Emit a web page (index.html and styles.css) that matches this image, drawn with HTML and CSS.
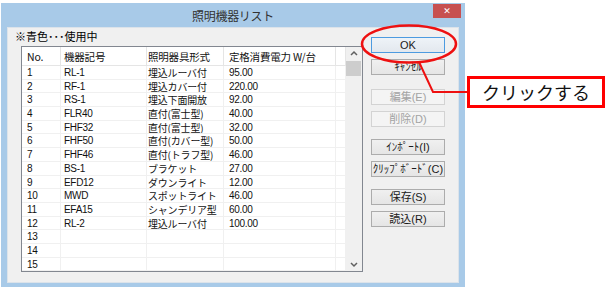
FILE: index.html
```html
<!DOCTYPE html>
<html lang="ja">
<head>
    <meta charset="UTF-8">
    <title>照明機器リスト</title>
    <link rel="stylesheet" href="styles.css">
</head>
<body>

<div class="window">
    <div class="title-bar">
        <span class="title">照明機器リスト</span>
        <span class="close-btn">&#x2715;</span>
    </div>

    <div class="window-body">
        <div class="list-side">
            <div class="note">※青色･･･使用中</div>

            <div class="list-box">
                <div class="grid">
                    <div class="row head">
                        <div class="c1">No.</div>
                        <div class="c2">機器記号</div>
                        <div class="c3">照明器具形式</div>
                        <div class="c4">定格消費電力 W/台</div>
                        <div class="c5"></div>
                    </div>
                    <div class="row"><div class="c1">1</div><div class="c2">RL-1</div><div class="c3">埋込ルーバ付</div><div class="c4">95.00</div><div class="c5"></div></div>
                    <div class="row"><div class="c1">2</div><div class="c2">RF-1</div><div class="c3">埋込カバー付</div><div class="c4">220.00</div><div class="c5"></div></div>
                    <div class="row"><div class="c1">3</div><div class="c2">RS-1</div><div class="c3">埋込下面開放</div><div class="c4">92.00</div><div class="c5"></div></div>
                    <div class="row"><div class="c1">4</div><div class="c2">FLR40</div><div class="c3">直付(富士型)</div><div class="c4">40.00</div><div class="c5"></div></div>
                    <div class="row"><div class="c1">5</div><div class="c2">FHF32</div><div class="c3">直付(富士型)</div><div class="c4">32.00</div><div class="c5"></div></div>
                    <div class="row"><div class="c1">6</div><div class="c2">FHF50</div><div class="c3">直付(カバー型)</div><div class="c4">50.00</div><div class="c5"></div></div>
                    <div class="row"><div class="c1">7</div><div class="c2">FHF46</div><div class="c3">直付(トラフ型)</div><div class="c4">46.00</div><div class="c5"></div></div>
                    <div class="row"><div class="c1">8</div><div class="c2">BS-1</div><div class="c3">ブラケット</div><div class="c4">27.00</div><div class="c5"></div></div>
                    <div class="row"><div class="c1">9</div><div class="c2">EFD12</div><div class="c3">ダウンライト</div><div class="c4">12.00</div><div class="c5"></div></div>
                    <div class="row"><div class="c1">10</div><div class="c2">MWD</div><div class="c3">スポットライト</div><div class="c4">46.00</div><div class="c5"></div></div>
                    <div class="row"><div class="c1">11</div><div class="c2">EFA15</div><div class="c3">シャンデリア型</div><div class="c4">60.00</div><div class="c5"></div></div>
                    <div class="row"><div class="c1">12</div><div class="c2">RL-2</div><div class="c3">埋込ルーバ付</div><div class="c4">100.00</div><div class="c5"></div></div>
                    <div class="row"><div class="c1">13</div><div class="c2"></div><div class="c3"></div><div class="c4"></div><div class="c5"></div></div>
                    <div class="row"><div class="c1">14</div><div class="c2"></div><div class="c3"></div><div class="c4"></div><div class="c5"></div></div>
                    <div class="row"><div class="c1">15</div><div class="c2"></div><div class="c3"></div><div class="c4"></div><div class="c5"></div></div>
                </div>

                <div class="scrollbar">
                    <svg class="arrow" width="16" height="13" viewBox="0 0 16 13">
                        <path d="M5 8 L8 5 L11 8" fill="none" stroke="#606060" stroke-width="1.5"/>
                    </svg>
                    <div class="thumb"></div>
                    <div class="track"></div>
                    <svg class="arrow" width="16" height="13" viewBox="0 0 16 13">
                        <path d="M5 5 L8 8 L11 5" fill="none" stroke="#606060" stroke-width="1.5"/>
                    </svg>
                </div>
            </div>
        </div>

        <div class="buttons">
            <div class="btn-group">
                <button class="btn default">OK</button>
                <button class="btn">ｷｬﾝｾﾙ</button>
            </div>
            <div class="btn-group">
                <button class="btn" disabled>編集(E)</button>
                <button class="btn" disabled>削除(D)</button>
            </div>
            <div class="btn-group tight">
                <button class="btn">ｲﾝﾎﾟｰﾄ(I)</button>
                <button class="btn">ｸﾘｯﾌﾟﾎﾞｰﾄﾞ(C)</button>
            </div>
            <div class="btn-group tight">
                <button class="btn">保存(S)</button>
                <button class="btn">読込(R)</button>
            </div>
        </div>
    </div>
</div>

<!-- annotation drawn over the screenshot -->
<svg class="marks" width="608" height="290" viewBox="0 0 608 290">
    <ellipse cx="409" cy="44" rx="47" ry="18.5" fill="none" stroke="#ee1010" stroke-width="2.5"/>
    <polyline points="419,62 433,92 467,92" fill="none" stroke="#ee1010" stroke-width="2"/>
</svg>
<div class="callout">クリックする</div>

</body>
</html>
```

FILE: styles.css
```css
/* Page */
body {
    margin: 0;
    width: 608px;
    height: 290px;
    background: #ffffff;
    font-family: "Noto Sans CJK JP", sans-serif;
    position: relative;
    overflow: hidden;
}

/* Dialog window frame */
.window {
    margin: 3px 0 0 1px;
    width: 464px;
    height: 284px;
    box-sizing: border-box;
    background: #a8cae8;
    padding: 0 6px 4px 6px;
    display: flex;
    flex-direction: column;
}

.title-bar {
    height: 24px;
    display: flex;
    align-items: center;
    justify-content: center;
    position: relative;
}

.title {
    font-size: 12px;
    color: #333333;
    letter-spacing: -0.3px;
}

.close-btn {
    position: absolute;
    right: -2px;
    top: 1px;
    width: 28px;
    height: 14px;
    background: #c75050;
    color: #ffffff;
    font-size: 9px;
    font-weight: bold;
    display: flex;
    align-items: center;
    justify-content: center;
    font-family: "DejaVu Sans", sans-serif;
}

.window-body {
    flex: 1;
    background: #f0f0f0;
    display: flex;
    border: 1px solid #dce3ea;
}

/* Left side: note and list */
.list-side {
    display: flex;
    flex-direction: column;
    padding-left: 7px;
}

.note {
    font-size: 11px;
    line-height: 17px;
    color: #000000;
    white-space: nowrap;
}

.list-box {
    margin: 1px 0 0 6px;
    width: 342px;
    height: 226px;
    box-sizing: border-box;
    border: 1px solid #828790;
    background: #ffffff;
    display: flex;
}

.grid {
    width: 324px;
    height: 224px;
    overflow: hidden;
}

.row {
    display: grid;
    grid-template-columns: 39px 86px 77px 112px 10px;
    height: 13.7px;
    line-height: 13px;
    font-family: "Liberation Sans", "Noto Sans CJK JP", sans-serif;
    font-size: 10px;
    letter-spacing: -0.3px;
    color: #111111;
    box-sizing: border-box;
    border-bottom: 1px solid #f0f0f0;
}

.row > div {
    border-right: 1px solid #f0f0f0;
    white-space: nowrap;
    overflow: hidden;
}

.row .c3 {
    font-family: "Noto Sans CJK JP", sans-serif;
    font-size: 10px;
    letter-spacing: -0.2px;
}

.row.head {
    height: 19px;
    line-height: 19px;
    font-size: 10.5px;
    border-bottom: 1px solid #e5e5e5;
}

.row.head > div {
    border-right: 1px solid #e5e5e5;
    font-family: "Noto Sans CJK JP", sans-serif;
    font-size: 10.5px;
    letter-spacing: -0.2px;
}

.c1 { padding-left: 5px; }
.c2 { padding-left: 3px; }
.c3 { padding-left: 1px; }
.c4 { padding-left: 5px; }

/* Vertical scrollbar */
.scrollbar {
    width: 16px;
    background: #f0f0f0;
    display: flex;
    flex-direction: column;
}

.arrow {
    display: block;
    flex: none;
}

.thumb {
    height: 15px;
    margin: 1px 1px 0 0;
    background: #cdcdcd;
}

.track {
    flex: 1;
}

/* Button column */
.buttons {
    margin: 9px 0 0 8px;
    display: flex;
    flex-direction: column;
    gap: 14px;
}

.btn-group {
    display: flex;
    flex-direction: column;
    gap: 6px;
}

.btn-group.tight {
    margin-top: -2px;
}

.btn {
    width: 74px;
    height: 16px;
    padding: 0;
    box-sizing: border-box;
    border: 1px solid #acacac;
    background: linear-gradient(#f0f0f0, #e5e5e5);
    font-family: "Liberation Sans", "Noto Sans CJK JP", sans-serif;
    font-size: 11px;
    line-height: 13px;
    color: #1a1a1a;
    white-space: nowrap;
}

.btn.default {
    border-color: #4d9be0;
    background: linear-gradient(#eef3f8, #e3e8ee);
}

.btn:disabled {
    border-color: #d3d3d3;
    background: #f4f4f4;
    color: #a3a3a3;
}

/* Annotation overlay */
.marks {
    position: absolute;
    left: 0;
    top: 0;
    pointer-events: none;
}

.callout {
    position: absolute;
    left: 467px;
    top: 76px;
    width: 138px;
    height: 32px;
    box-sizing: border-box;
    border: 3px solid #ff0000;
    background: #ffffff;
    font-size: 18px;
    line-height: 26px;
    text-align: center;
    color: #111111;
}
```
